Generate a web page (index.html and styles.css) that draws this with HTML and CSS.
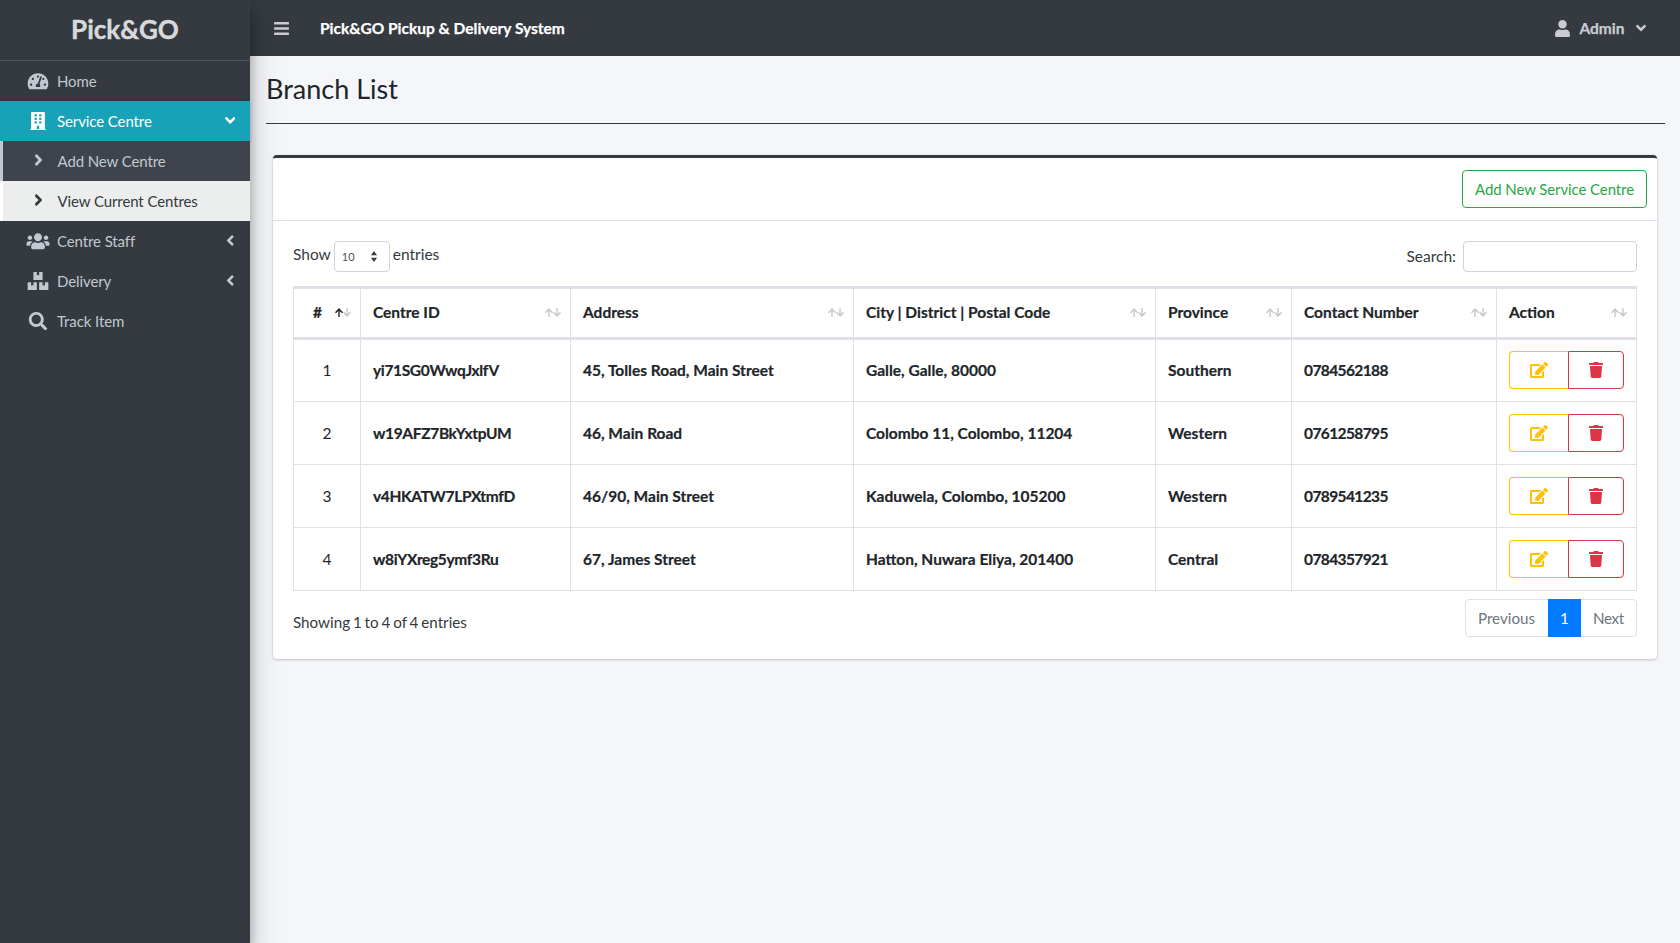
FILE: index.html
```html
<!DOCTYPE html>
<html>
<head>
    <meta charset="utf-8">
    <title>Pick&amp;GO</title>
    <link rel="stylesheet" href="styles.css">
</head>
<body>
    <aside class="sidebar">
        <div class="brand">Pick&amp;GO</div>
        <nav class="menu">
            <a class="menu-item">
                <svg class="menu-icon" viewBox="0 0 576 512"><path d="M288 32C128.94 32 0 160.94 0 320c0 52.8 14.25 102.26 39.06 144.8 5.61 9.62 16.3 15.2 27.44 15.2h443c11.14 0 21.83-5.58 27.44-15.2C561.75 422.26 576 372.8 576 320c0-159.06-128.94-288-288-288zm0 64c14.71 0 26.58 10.13 30.32 23.65-1.11 2.26-2.64 4.23-3.45 6.67l-9.22 27.67c-5.13 3.49-10.97 6.01-17.64 6.01-17.67 0-32-14.33-32-32S270.33 96 288 96zM96 384c-17.67 0-32-14.33-32-32s14.33-32 32-32 32 14.33 32 32-14.33 32-32 32zm48-160c-17.67 0-32-14.33-32-32s14.33-32 32-32 32 14.33 32 32-14.33 32-32 32zm246.77-72.41l-61.33 184C343.13 347.33 352 364.54 352 384c0 11.72-3.38 22.55-8.88 32H232.88c-5.5-9.45-8.88-20.28-8.88-32 0-33.94 26.5-61.43 59.9-63.59l61.34-184.01c4.17-12.56 17.73-19.45 30.36-15.17 12.57 4.19 19.35 17.79 15.17 30.36zm14.66 57.2l15.52-46.55c3.47-1.29 7.13-2.23 11.05-2.23 17.67 0 32 14.33 32 32s-14.33 32-32 32c-11.38-.01-20.89-6.28-26.57-15.22zM480 384c-17.67 0-32-14.33-32-32s14.33-32 32-32 32 14.33 32 32-14.33 32-32 32z"/></svg>
                <span>Home</span>
            </a>
            <a class="menu-item active">
                <svg class="menu-icon" viewBox="0 0 448 512"><path d="M436 480h-20V24c0-13.255-10.745-24-24-24H56C42.745 0 32 10.745 32 24v456H12c-6.627 0-12 5.373-12 12v20h448v-20c0-6.627-5.373-12-12-12zM128 76c0-6.627 5.373-12 12-12h40c6.627 0 12 5.373 12 12v40c0 6.627-5.373 12-12 12h-40c-6.627 0-12-5.373-12-12V76zm0 96c0-6.627 5.373-12 12-12h40c6.627 0 12 5.373 12 12v40c0 6.627-5.373 12-12 12h-40c-6.627 0-12-5.373-12-12v-40zm52 148h-40c-6.627 0-12-5.373-12-12v-40c0-6.627 5.373-12 12-12h40c6.627 0 12 5.373 12 12v40c0 6.627-5.373 12-12 12zm76 160h-64v-84c0-6.627 5.373-12 12-12h40c6.627 0 12 5.373 12 12v84zm64-172c0 6.627-5.373 12-12 12h-40c-6.627 0-12-5.373-12-12v-40c0-6.627 5.373-12 12-12h40c6.627 0 12 5.373 12 12v40zm0-96c0 6.627-5.373 12-12 12h-40c-6.627 0-12-5.373-12-12v-40c0-6.627 5.373-12 12-12h40c6.627 0 12 5.373 12 12v40zm0-96c0 6.627-5.373 12-12 12h-40c-6.627 0-12-5.373-12-12V76c0-6.627 5.373-12 12-12h40c6.627 0 12 5.373 12 12v40z"/></svg>
                <span>Service Centre</span>
                <svg class="menu-caret" viewBox="0 0 320 512"><path d="M143 352.3L7 216.3c-9.4-9.4-9.4-24.6 0-33.9l22.6-22.6c9.4-9.4 24.6-9.4 33.9 0l96.4 96.4 96.4-96.4c9.4-9.4 24.6-9.4 33.9 0l22.6 22.6c9.4 9.4 9.4 24.6 0 33.9l-136 136c-9.2 9.4-24.4 9.4-33.8 0z"/></svg>
            </a>
            <a class="menu-item sub">
                <svg class="sub-icon" viewBox="0 0 256 512"><path d="M224.3 273l-136 136c-9.4 9.4-24.6 9.4-33.9 0l-22.6-22.6c-9.4-9.4-9.4-24.6 0-33.9l96.4-96.4-96.4-96.4c-9.4-9.4-9.4-24.6 0-33.9L54.3 103c9.4-9.4 24.6-9.4 33.9 0l136 136c9.5 9.4 9.5 24.6.1 34z"/></svg>
                <span>Add New Centre</span>
            </a>
            <a class="menu-item sub current">
                <svg class="sub-icon" viewBox="0 0 256 512"><path d="M224.3 273l-136 136c-9.4 9.4-24.6 9.4-33.9 0l-22.6-22.6c-9.4-9.4-9.4-24.6 0-33.9l96.4-96.4-96.4-96.4c-9.4-9.4-9.4-24.6 0-33.9L54.3 103c9.4-9.4 24.6-9.4 33.9 0l136 136c9.5 9.4 9.5 24.6.1 34z"/></svg>
                <span>View Current Centres</span>
            </a>
            <a class="menu-item">
                <svg class="menu-icon" viewBox="0 0 640 512"><path d="M96 224c35.3 0 64-28.7 64-64s-28.7-64-64-64-64 28.7-64 64 28.7 64 64 64zm448 0c35.3 0 64-28.7 64-64s-28.7-64-64-64-64 28.7-64 64 28.7 64 64 64zm32 32h-64c-17.6 0-33.5 7.1-45.1 18.6 40.3 22.1 68.9 62 75.1 109.4h66c17.7 0 32-14.3 32-32v-32c0-35.3-28.7-64-64-64zm-256 0c61.9 0 112-50.1 112-112S381.9 32 320 32 208 82.1 208 144s50.1 112 112 112zm76.8 32h-8.3c-20.8 10-43.9 16-68.5 16s-47.6-6-68.5-16h-8.3C179.6 288 128 339.6 128 403.2V432c0 26.5 21.5 48 48 48h288c26.5 0 48-21.5 48-48v-28.8c0-63.6-51.6-115.2-115.2-115.2zm-223.7-13.4C161.5 263.1 145.6 256 128 256H64c-35.3 0-64 28.7-64 64v32c0 17.7 14.3 32 32 32h65.9c6.3-47.4 34.9-87.3 75.2-109.4z"/></svg>
                <span>Centre Staff</span>
                <svg class="menu-caret side" viewBox="0 0 256 512"><path d="M31.7 239l136-136c9.4-9.4 24.6-9.4 33.9 0l22.6 22.6c9.4 9.4 9.4 24.6 0 33.9L127.9 256l96.4 96.4c9.4 9.4 9.4 24.6 0 33.9L201.7 409c-9.4 9.4-24.6 9.4-33.9 0l-136-136c-9.5-9.4-9.5-24.6-.1-34z"/></svg>
            </a>
            <a class="menu-item">
                <svg class="menu-icon" viewBox="0 0 576 512"><path d="M560 288h-80v96l-32-21.3-32 21.3v-96h-80c-8.8 0-16 7.2-16 16v192c0 8.8 7.2 16 16 16h224c8.8 0 16-7.2 16-16V304c0-8.8-7.2-16-16-16zm-384-64h224c8.8 0 16-7.2 16-16V16c0-8.8-7.2-16-16-16h-80v96l-32-21.3L256 96V0h-80c-8.8 0-16 7.2-16 16v192c0 8.8 7.2 16 16 16zm64 64h-80v96l-32-21.3L96 384v-96H16c-8.8 0-16 7.2-16 16v192c0 8.8 7.2 16 16 16h224c8.8 0 16-7.2 16-16V304c0-8.8-7.2-16-16-16z"/></svg>
                <span>Delivery</span>
                <svg class="menu-caret side" viewBox="0 0 256 512"><path d="M31.7 239l136-136c9.4-9.4 24.6-9.4 33.9 0l22.6 22.6c9.4 9.4 9.4 24.6 0 33.9L127.9 256l96.4 96.4c9.4 9.4 9.4 24.6 0 33.9L201.7 409c-9.4 9.4-24.6 9.4-33.9 0l-136-136c-9.5-9.4-9.5-24.6-.1-34z"/></svg>
            </a>
            <a class="menu-item">
                <svg class="menu-icon" viewBox="0 0 512 512"><path d="M505 442.7L405.3 343c-4.5-4.5-10.6-7-17-7H372c27.6-35.3 44-79.7 44-128C416 93.1 322.9 0 208 0S0 93.1 0 208s93.1 208 208 208c48.3 0 92.7-16.4 128-44v16.3c0 6.4 2.5 12.5 7 17l99.7 99.7c9.4 9.4 24.6 9.4 33.9 0l28.3-28.3c9.4-9.4 9.4-24.6.1-34zM208 336c-70.7 0-128-57.2-128-128 0-70.7 57.2-128 128-128 70.7 0 128 57.2 128 128 0 70.7-57.2 128-128 128z"/></svg>
                <span>Track Item</span>
            </a>
        </nav>
    </aside>

    <div class="page">
        <header class="topbar">
            <svg class="bars" viewBox="0 0 448 512"><path d="M16 132h416c8.837 0 16-7.163 16-16V76c0-8.837-7.163-16-16-16H16C7.163 60 0 67.163 0 76v40c0 8.837 7.163 16 16 16zm0 160h416c8.837 0 16-7.163 16-16v-40c0-8.837-7.163-16-16-16H16c-8.837 0-16 7.163-16 16v40c0 8.837 7.163 16 16 16zm0 160h416c8.837 0 16-7.163 16-16v-40c0-8.837-7.163-16-16-16H16c-8.837 0-16 7.163-16 16v40c0 8.837 7.163 16 16 16z"/></svg>
            <div class="topbar-title">Pick&amp;GO Pickup &amp; Delivery System</div>
            <div class="topbar-user">
                <svg class="user-icon" viewBox="0 0 448 512"><path d="M224 256c70.7 0 128-57.3 128-128S294.7 0 224 0 96 57.3 96 128s57.3 128 128 128zm89.6 32h-16.7c-22.2 10.2-46.9 16-72.9 16s-50.6-5.8-72.9-16h-16.7C60.2 288 0 348.2 0 422.4V464c0 26.5 21.5 48 48 48h352c26.5 0 48-21.5 48-48v-41.6c0-74.2-60.2-134.4-134.4-134.4z"/></svg>
                <span>Admin</span>
                <svg class="user-caret" viewBox="0 0 320 512"><path d="M143 352.3L7 216.3c-9.4-9.4-9.4-24.6 0-33.9l22.6-22.6c9.4-9.4 24.6-9.4 33.9 0l96.4 96.4 96.4-96.4c9.4-9.4 24.6-9.4 33.9 0l22.6 22.6c9.4 9.4 9.4 24.6 0 33.9l-136 136c-9.2 9.4-24.4 9.4-33.8 0z"/></svg>
            </div>
        </header>

        <main class="content">
            <h1 class="page-title">Branch List</h1>
            <hr class="title-rule">

            <section class="card">
                <div class="card-header">
                    <a class="btn-add">Add New Service Centre</a>
                </div>
                <div class="card-body">
                    <div class="table-top">
                        <div class="length">
                            Show
                            <div class="length-select">
                                <span>10</span>
                                <svg viewBox="0 0 8 13"><path d="M4 0l3.6 5H.4zM4 13L.4 8h7.2z"/></svg>
                            </div>
                            entries
                        </div>
                        <div class="search">
                            <span class="search-label">Search:</span>
                            <input class="search-input" type="text">
                        </div>
                    </div>

                    <table class="branches">
                        <colgroup>
                            <col class="c-no"><col class="c-id"><col class="c-addr"><col class="c-city"><col class="c-prov"><col class="c-phone"><col class="c-act">
                        </colgroup>
                        <thead>
                            <tr>
                                <th class="no-head"><div class="th-in"><span>#</span><svg class="sort asc" viewBox="0 0 16 9"><path class="up" d="M4 0l4 4.2-1 1-2.300-2.200V9H3.300V3L1 5.200l-1-1z"/><path class="down" d="M12 9L8 4.800l1-1 2.300 2.200V0h1.400v6L15 3.800l1 1z"/></svg></div></th>
                                <th><div class="th-in"><span>Centre ID</span><svg class="sort" viewBox="0 0 16 9"><path class="up" d="M4 0l4 4.2-1 1-2.300-2.200V9H3.300V3L1 5.200l-1-1z"/><path class="down" d="M12 9L8 4.800l1-1 2.300 2.200V0h1.400v6L15 3.800l1 1z"/></svg></div></th>
                                <th><div class="th-in"><span>Address</span><svg class="sort" viewBox="0 0 16 9"><path class="up" d="M4 0l4 4.2-1 1-2.300-2.200V9H3.300V3L1 5.200l-1-1z"/><path class="down" d="M12 9L8 4.800l1-1 2.300 2.200V0h1.400v6L15 3.800l1 1z"/></svg></div></th>
                                <th><div class="th-in"><span>City | District | Postal Code</span><svg class="sort" viewBox="0 0 16 9"><path class="up" d="M4 0l4 4.2-1 1-2.300-2.200V9H3.300V3L1 5.200l-1-1z"/><path class="down" d="M12 9L8 4.800l1-1 2.300 2.200V0h1.400v6L15 3.800l1 1z"/></svg></div></th>
                                <th><div class="th-in"><span>Province</span><svg class="sort" viewBox="0 0 16 9"><path class="up" d="M4 0l4 4.2-1 1-2.300-2.200V9H3.300V3L1 5.200l-1-1z"/><path class="down" d="M12 9L8 4.800l1-1 2.300 2.200V0h1.400v6L15 3.800l1 1z"/></svg></div></th>
                                <th><div class="th-in"><span>Contact Number</span><svg class="sort" viewBox="0 0 16 9"><path class="up" d="M4 0l4 4.2-1 1-2.300-2.200V9H3.300V3L1 5.200l-1-1z"/><path class="down" d="M12 9L8 4.800l1-1 2.300 2.200V0h1.400v6L15 3.800l1 1z"/></svg></div></th>
                                <th><div class="th-in"><span>Action</span><svg class="sort" viewBox="0 0 16 9"><path class="up" d="M4 0l4 4.2-1 1-2.300-2.200V9H3.300V3L1 5.200l-1-1z"/><path class="down" d="M12 9L8 4.800l1-1 2.300 2.200V0h1.400v6L15 3.800l1 1z"/></svg></div></th>
                            </tr>
                        </thead>
                        <tbody>
                            <tr>
                                <td class="no">1</td>
                                <td class="cid">yi71SG0WwqJxlfV</td>
                                <td>45, Tolles Road, Main Street</td>
                                <td>Galle, Galle, 80000</td>
                                <td>Southern</td>
                                <td class="phone">0784562188</td>
                                <td class="act">
                                    <div class="btn-pair">
                                        <a class="btn-edit"><svg viewBox="0 0 576 512"><path d="M402.6 83.2l90.2 90.2c3.8 3.8 3.8 10 0 13.8L274.4 405.6l-92.8 10.3c-12.4 1.4-22.9-9.1-21.5-21.5l10.3-92.8L388.8 83.2c3.8-3.8 10-3.8 13.8 0zm162-22.9l-48.8-48.8c-15.2-15.2-39.9-15.2-55.2 0l-35.4 35.4c-3.8 3.8-3.8 10 0 13.8l90.2 90.2c3.8 3.8 10 3.8 13.8 0l35.4-35.4c15.2-15.3 15.2-40 0-55.2zM384 346.2V448H64V128h229.8c3.2 0 6.2-1.3 8.5-3.5l40-40c7.6-7.6 2.2-20.5-8.5-20.5H48C21.5 64 0 85.5 0 112v352c0 26.5 21.5 48 48 48h352c26.5 0 48-21.5 48-48V306.2c0-10.7-12.9-16-20.5-8.5l-40 40c-2.2 2.3-3.5 5.3-3.5 8.5z"/></svg></a>
                                        <a class="btn-del"><svg viewBox="0 0 448 512"><path d="M432 32H312l-9.4-18.7A24 24 0 0 0 281.1 0H166.8a23.72 23.72 0 0 0-21.4 13.3L136 32H16A16 16 0 0 0 0 48v32a16 16 0 0 0 16 16h416a16 16 0 0 0 16-16V48a16 16 0 0 0-16-16zM53.2 467a48 48 0 0 0 47.9 45h245.8a48 48 0 0 0 47.9-45L416 128H32z"/></svg></a>
                                    </div>
                                </td>
                            </tr>
                            <tr>
                                <td class="no">2</td>
                                <td class="cid">w19AFZ7BkYxtpUM</td>
                                <td>46, Main Road</td>
                                <td>Colombo 11, Colombo, 11204</td>
                                <td>Western</td>
                                <td class="phone">0761258795</td>
                                <td class="act">
                                    <div class="btn-pair">
                                        <a class="btn-edit"><svg viewBox="0 0 576 512"><path d="M402.6 83.2l90.2 90.2c3.8 3.8 3.8 10 0 13.8L274.4 405.6l-92.8 10.3c-12.4 1.4-22.9-9.1-21.5-21.5l10.3-92.8L388.8 83.2c3.8-3.8 10-3.8 13.8 0zm162-22.9l-48.8-48.8c-15.2-15.2-39.9-15.2-55.2 0l-35.4 35.4c-3.8 3.8-3.8 10 0 13.8l90.2 90.2c3.8 3.8 10 3.8 13.8 0l35.4-35.4c15.2-15.3 15.2-40 0-55.2zM384 346.2V448H64V128h229.8c3.2 0 6.2-1.3 8.5-3.5l40-40c7.6-7.6 2.2-20.5-8.5-20.5H48C21.5 64 0 85.5 0 112v352c0 26.5 21.5 48 48 48h352c26.5 0 48-21.5 48-48V306.2c0-10.7-12.9-16-20.5-8.5l-40 40c-2.2 2.3-3.5 5.3-3.5 8.5z"/></svg></a>
                                        <a class="btn-del"><svg viewBox="0 0 448 512"><path d="M432 32H312l-9.4-18.7A24 24 0 0 0 281.1 0H166.8a23.72 23.72 0 0 0-21.4 13.3L136 32H16A16 16 0 0 0 0 48v32a16 16 0 0 0 16 16h416a16 16 0 0 0 16-16V48a16 16 0 0 0-16-16zM53.2 467a48 48 0 0 0 47.9 45h245.8a48 48 0 0 0 47.9-45L416 128H32z"/></svg></a>
                                    </div>
                                </td>
                            </tr>
                            <tr>
                                <td class="no">3</td>
                                <td class="cid">v4HKATW7LPXtmfD</td>
                                <td>46/90, Main Street</td>
                                <td>Kaduwela, Colombo, 105200</td>
                                <td>Western</td>
                                <td class="phone">0789541235</td>
                                <td class="act">
                                    <div class="btn-pair">
                                        <a class="btn-edit"><svg viewBox="0 0 576 512"><path d="M402.6 83.2l90.2 90.2c3.8 3.8 3.8 10 0 13.8L274.4 405.6l-92.8 10.3c-12.4 1.4-22.9-9.1-21.5-21.5l10.3-92.8L388.8 83.2c3.8-3.8 10-3.8 13.8 0zm162-22.9l-48.8-48.8c-15.2-15.2-39.9-15.2-55.2 0l-35.4 35.4c-3.8 3.8-3.8 10 0 13.8l90.2 90.2c3.8 3.8 10 3.8 13.8 0l35.4-35.4c15.2-15.3 15.2-40 0-55.2zM384 346.2V448H64V128h229.8c3.2 0 6.2-1.3 8.5-3.5l40-40c7.6-7.6 2.2-20.5-8.5-20.5H48C21.5 64 0 85.5 0 112v352c0 26.5 21.5 48 48 48h352c26.5 0 48-21.5 48-48V306.2c0-10.7-12.9-16-20.5-8.5l-40 40c-2.2 2.3-3.5 5.3-3.5 8.5z"/></svg></a>
                                        <a class="btn-del"><svg viewBox="0 0 448 512"><path d="M432 32H312l-9.4-18.7A24 24 0 0 0 281.1 0H166.8a23.72 23.72 0 0 0-21.4 13.3L136 32H16A16 16 0 0 0 0 48v32a16 16 0 0 0 16 16h416a16 16 0 0 0 16-16V48a16 16 0 0 0-16-16zM53.2 467a48 48 0 0 0 47.9 45h245.8a48 48 0 0 0 47.9-45L416 128H32z"/></svg></a>
                                    </div>
                                </td>
                            </tr>
                            <tr>
                                <td class="no">4</td>
                                <td class="cid">w8iYXreg5ymf3Ru</td>
                                <td>67, James Street</td>
                                <td>Hatton, Nuwara Eliya, 201400</td>
                                <td>Central</td>
                                <td class="phone">0784357921</td>
                                <td class="act">
                                    <div class="btn-pair">
                                        <a class="btn-edit"><svg viewBox="0 0 576 512"><path d="M402.6 83.2l90.2 90.2c3.8 3.8 3.8 10 0 13.8L274.4 405.6l-92.8 10.3c-12.4 1.4-22.9-9.1-21.5-21.5l10.3-92.8L388.8 83.2c3.8-3.8 10-3.8 13.8 0zm162-22.9l-48.8-48.8c-15.2-15.2-39.9-15.2-55.2 0l-35.4 35.4c-3.8 3.8-3.8 10 0 13.8l90.2 90.2c3.8 3.8 10 3.8 13.8 0l35.4-35.4c15.2-15.3 15.2-40 0-55.2zM384 346.2V448H64V128h229.8c3.2 0 6.2-1.3 8.5-3.5l40-40c7.6-7.6 2.2-20.5-8.5-20.5H48C21.5 64 0 85.5 0 112v352c0 26.5 21.5 48 48 48h352c26.5 0 48-21.5 48-48V306.2c0-10.7-12.9-16-20.5-8.5l-40 40c-2.2 2.3-3.5 5.3-3.5 8.5z"/></svg></a>
                                        <a class="btn-del"><svg viewBox="0 0 448 512"><path d="M432 32H312l-9.4-18.7A24 24 0 0 0 281.1 0H166.8a23.72 23.72 0 0 0-21.4 13.3L136 32H16A16 16 0 0 0 0 48v32a16 16 0 0 0 16 16h416a16 16 0 0 0 16-16V48a16 16 0 0 0-16-16zM53.2 467a48 48 0 0 0 47.9 45h245.8a48 48 0 0 0 47.9-45L416 128H32z"/></svg></a>
                                    </div>
                                </td>
                            </tr>
                        </tbody>
                    </table>

                    <div class="table-bottom">
                        <div class="info">Showing 1 to 4 of 4 entries</div>
                        <div class="pager">
                            <a class="pager-item">Previous</a>
                            <a class="pager-item on">1</a>
                            <a class="pager-item">Next</a>
                        </div>
                    </div>
                </div>
            </section>
        </main>
    </div>
</body>
</html>
```

FILE: styles.css
```css
* {
    box-sizing: border-box;
}

html, body {
    height: 100%;
}

body {
    margin: 0;
    display: flex;
    background: #f4f6f9;
    color: #212529;
    font-family: Lato, "Noto Sans", sans-serif;
    font-size: 16px;
    line-height: 24px;
    overflow: hidden;
}

svg {
    display: block;
    fill: currentColor;
}

/* sidebar */
.sidebar {
    width: 250px;
    flex: none;
    background: #343a40;
    box-shadow: 0 14px 28px rgba(0, 0, 0, .25), 0 10px 10px rgba(0, 0, 0, .22);
    position: relative;
    z-index: 2;
}

.brand {
    height: 61px;
    border-bottom: 1px solid #4b545c;
    color: #d7d9db;
    font-size: 26px;
    font-weight: 700;
    line-height: 58px;
    text-align: center;
    -webkit-text-stroke: .4px #d7d9db;
}

.menu-item {
    height: 40px;
    display: flex;
    align-items: center;
    color: #c2c7d0;
    font-size: 15px;
    letter-spacing: -.1px;
}

.menu-icon {
    width: 24px;
    height: 18.4px;
    margin: 0 7px 0 26px;
    flex: none;
}

.menu-item.active {
    background: #17a2b8;
    color: #fff;
    box-shadow: 0 1px 3px rgba(0, 0, 0, .2);
}

.menu-caret {
    width: 10.5px;
    height: 16.8px;
    margin-left: auto;
    margin-right: 15px;
    margin-top: -2px;
}

.menu-caret.side {
    width: 8.5px;
    height: 17px;
    margin-right: 16px;
    margin-top: -2px;
}

.menu-item.sub {
    background: #3f444c;
    border-left: 3px solid #c2c7d0;
}

.menu-item.sub.current {
    background: #eceeee;
    border-left-color: #fff;
    color: #343a40;
}

.sub-icon {
    width: 9px;
    height: 18px;
    margin: -2px 14.5px 0 31px;
    flex: none;
}

/* top bar */
.page {
    flex: 1;
    min-width: 0;
    display: flex;
    flex-direction: column;
}

.topbar {
    height: 56px;
    flex: none;
    display: flex;
    align-items: center;
    background: #343a40;
    color: #fff;
    font-weight: 700;
}

.bars {
    width: 15px;
    height: 17px;
    margin-left: 24px;
    color: #c9ccd0;
}

.topbar-title {
    margin-left: 31px;
    font-size: 15.5px;
    -webkit-text-stroke: .25px #fff;
}

.topbar-user {
    margin-left: auto;
    margin-right: 33px;
    display: flex;
    align-items: center;
    color: #c9ccd0;
    font-size: 15.5px;
    -webkit-text-stroke: .25px #c9ccd0;
}

.user-icon {
    width: 15px;
    height: 17px;
    margin-right: 9.5px;
}

.user-caret {
    width: 12px;
    height: 16px;
    margin-left: 10.5px;
}

/* content */
.content {
    flex: 1;
    padding: 15px 15px 0 16px;
}

.page-title {
    margin: 0;
    height: 36px;
    color: #212529;
    font-size: 27px;
    font-weight: 400;
    line-height: 36px;
}

.title-rule {
    margin: 16px 0 31px;
    border: 0;
    border-top: 1px solid #343a40;
}

.card {
    margin: 0 8px 0 7px;
    background: #fff;
    border-top: 3px solid #343a40;
    border-radius: 4px;
    box-shadow: 0 0 1px rgba(0, 0, 0, .125), 0 1px 3px rgba(0, 0, 0, .2);
}

.card-header {
    display: flex;
    justify-content: flex-end;
    padding: 12px 10px;
    border-bottom: 1px solid #dee2e6;
}

.btn-add {
    height: 38px;
    padding: 0 12px;
    border: 1px solid #28a745;
    border-radius: 4px;
    color: #28a745;
    font-size: 15px;
    letter-spacing: -.1px;
    line-height: 36px;
}

.card-body {
    padding: 20px 20px 22px;
}

.table-top {
    display: flex;
    justify-content: space-between;
    height: 31px;
    margin-bottom: 14px;
}

.length {
    display: flex;
    align-items: center;
    gap: 3px;
    font-size: 15.5px;
    color: #343a40;
    margin-top: -5px;
}

.length-select {
    width: 56px;
    height: 31px;
    margin-top: 5px;
    padding: 0 7px;
    display: flex;
    align-items: center;
    justify-content: space-between;
    border: 1px solid #ced4da;
    border-radius: 4px;
    color: #495057;
    font-size: 11px;
}

.length-select svg {
    width: 8px;
    height: 11px;
    margin-right: 4px;
    color: #343a40;
}

.search {
    display: flex;
    align-items: center;
    gap: 7px;
    font-size: 15.5px;
    color: #343a40;
}

.search-label {
    margin-top: -2px;
}

.search-input {
    width: 174px;
    height: 31px;
    padding: 0;
    border: 1px solid #ced4da;
    border-radius: 4px;
    background: #fff;
}

/* table */
.branches {
    width: 1343px;
    table-layout: fixed;
    border-collapse: collapse;
    font-size: 15.5px;
}

.c-no { width: 67px; }
.c-id { width: 210px; }
.c-addr { width: 283px; }
.c-city { width: 302px; }
.c-prov { width: 136px; }
.c-phone { width: 205px; }
.c-act { width: 140px; }

.branches th,
.branches td {
    border: 1px solid #dee2e6;
    padding: 0 12px;
    text-align: left;
    font-weight: 700;
    -webkit-text-stroke: .2px #212529;
}

.branches thead th {
    height: 51px;
    padding-bottom: 2px;
    border-top-width: 3px;
    border-bottom-width: 3px;
}

.branches td {
    height: 63px;
    padding-bottom: 1px;
}

.branches td.no {
    text-align: center;
    font-weight: 400;
    -webkit-text-stroke: 0;
}

.branches td.cid {
    letter-spacing: -.35px;
}

.branches td.phone {
    letter-spacing: -.6px;
}

.branches .no-head {
    padding-left: 19px;
}

.th-in {
    display: flex;
    align-items: center;
    justify-content: space-between;
}

.sort {
    width: 16px;
    height: 9px;
    margin-right: -3px;
    flex: none;
    stroke-width: 0;
}

.sort path {
    opacity: .25;
}

.sort.asc .up {
    opacity: 1;
}

.btn-pair {
    display: flex;
}

.btn-edit,
.btn-del {
    height: 38px;
    display: flex;
    align-items: center;
    justify-content: center;
    border: 1px solid;
}

.btn-edit {
    width: 59px;
    color: #ffc107;
    border-radius: 4px 0 0 4px;
    border-right: 0;
}

.btn-del {
    width: 56px;
    color: #dc3545;
    border-radius: 0 4px 4px 0;
}

.btn-edit svg {
    width: 18px;
    height: 16px;
}

.btn-del svg {
    width: 14px;
    height: 16px;
}

.table-bottom {
    display: flex;
    justify-content: space-between;
    margin-top: 8px;
}

.info {
    margin-top: 11px;
    font-size: 15.2px;
    word-spacing: -1px;
    color: #343a40;
}

.pager {
    display: flex;
    height: 38px;
    border: 1px solid #dee2e6;
    border-radius: 4px;
    color: #6c757d;
    font-size: 15.2px;
    line-height: 36px;
}

.pager-item {
    padding: 0 12px;
}

.pager-item:first-child {
    padding-right: 13px;
}

.pager-item:last-child {
    letter-spacing: -.3px;
}

.pager-item.on {
    background: #007bff;
    color: #fff;
    margin: -1px 0;
    line-height: 38px;
}
```
